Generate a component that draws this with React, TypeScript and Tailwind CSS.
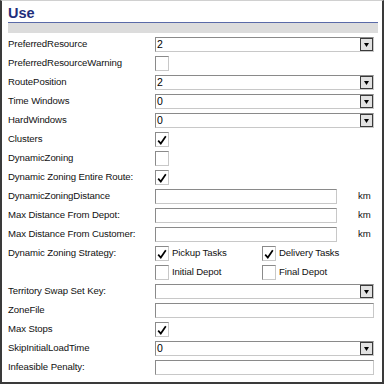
import React from "react";

const font = { fontFamily: '"Liberation Sans", Arial, sans-serif' };

function Check({ checked }: { checked?: boolean }) {
  return (
    <div className="w-[14px] h-[15px] border border-t-[#8a8a8a] border-l-[#8a8a8a] border-r-[#c8c8c8] border-b-[#c8c8c8] bg-white flex items-center justify-center">
      {checked && (
        <svg width="10" height="10" viewBox="0 0 10 10">
          <path d="M1.2 5.6 L3.8 8.6 L8.8 1.2" fill="none" stroke="#000" strokeWidth="1.7" />
        </svg>
      )}
    </div>
  );
}

function TextBox({ value, w = "w-[219px]" }: { value?: string; w?: string }) {
  return (
    <div className={`${w} h-[15px] border border-t-[#8a8a8a] border-l-[#8a8a8a] border-r-[#c8c8c8] border-b-[#c8c8c8] bg-white text-[10.5px] leading-[13px] pl-[2px]`}>
      {value}
    </div>
  );
}

function Select({ value }: { value: string }) {
  return (
    <div className="w-[219px] h-[15px] border border-t-[#8a8a8a] border-l-[#8a8a8a] border-r-[#c8c8c8] border-b-[#c8c8c8] bg-white flex items-center justify-between">
      <span className="text-[10.5px] leading-[13px] pl-[1px] text-black">{value}</span>
      <div className="w-[13px] h-[13px] border border-[#3a3a3a] bg-[#e2e2e2] flex items-center justify-center">
        <svg width="5" height="4" viewBox="0 0 5 4">
          <path d="M0 0 H5 L2.5 4 Z" fill="#000" />
        </svg>
      </div>
    </div>
  );
}

function Row({ label, children }: { label: string; children?: React.ReactNode }) {
  return (
    <div className="grid grid-cols-[147px_1fr] h-[19px] items-center">
      <span className="text-[9.6px] tracking-[-0.1px] text-[#111] whitespace-nowrap">{label}</span>
      <div className="flex items-center">{children}</div>
    </div>
  );
}

function Km() {
  return (
    <div className="flex items-center">
      <TextBox w="w-[182px]" />
      <span className="ml-[21px] text-[9.6px] text-[#111]">km</span>
    </div>
  );
}

function Opt({ checked, label }: { checked?: boolean; label: string }) {
  return (
    <div className="flex items-center w-[107px]">
      <Check checked={checked} />
      <span className="ml-[3px] text-[9.6px] tracking-[-0.1px] text-[#111]">{label}</span>
    </div>
  );
}

export default function App() {
  return (
    <div
      className="w-[384px] h-[384px] bg-white border-t border-t-[#d0d0d0] border-x-2 border-b-2 border-x-[#3a3a3a] border-b-[#3a3a3a] pl-[6px] pr-[4px] text-[#111]"
      style={font}
    >
      <div className="pt-[4px] h-[21px] text-[14.5px] font-bold leading-[16px] text-[#1f2d7b]">Use</div>
      <div className="h-[1px] bg-[#5a6aa8]" />
      <div className="h-[10px] bg-[#dcdcdc]" />
      <div className="pt-[2px]">
        <Row label="PreferredResource"><Select value="2" /></Row>
        <Row label="PreferredResourceWarning"><Check /></Row>
        <Row label="RoutePosition"><Select value="2" /></Row>
        <Row label="Time Windows"><Select value="0" /></Row>
        <Row label="HardWindows"><Select value="0" /></Row>
        <Row label="Clusters"><Check checked /></Row>
        <Row label="DynamicZoning"><Check /></Row>
        <Row label="Dynamic Zoning Entire Route:"><Check checked /></Row>
        <Row label="DynamicZoningDistance"><Km /></Row>
        <Row label="Max Distance From Depot:"><Km /></Row>
        <Row label="Max Distance From Customer:"><Km /></Row>
        <Row label="Dynamic Zoning Strategy:">
          <Opt checked label="Pickup Tasks" />
          <Opt checked label="Delivery Tasks" />
        </Row>
        <Row label="">
          <Opt label="Initial Depot" />
          <Opt label="Final Depot" />
        </Row>
        <Row label="Territory Swap Set Key:"><Select value="" /></Row>
        <Row label="ZoneFile"><TextBox /></Row>
        <Row label="Max Stops"><Check checked /></Row>
        <Row label="SkipInitialLoadTime"><Select value="0" /></Row>
        <Row label="Infeasible Penalty:"><TextBox /></Row>
      </div>
    </div>
  );
}
